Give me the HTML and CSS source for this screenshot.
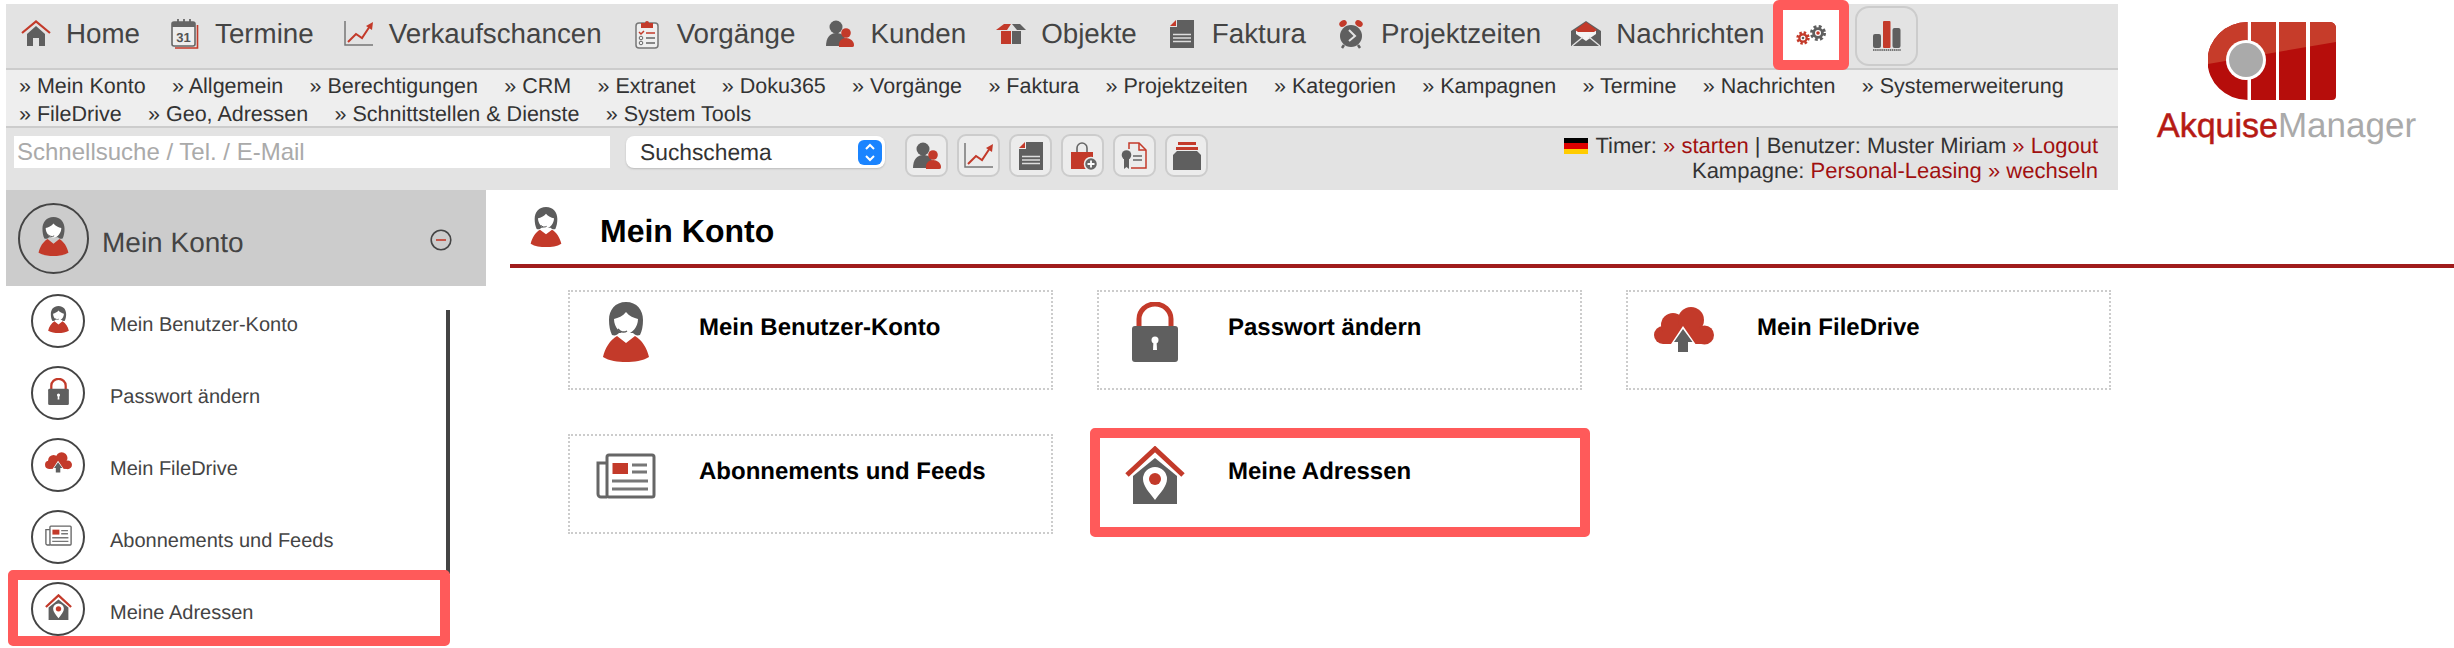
FILE: index.html
```html
<!DOCTYPE html>
<html lang="de">
<head>
  <meta charset="UTF-8">
  <meta name="viewport" content="width=device-width, initial-scale=1.0">
  <title>AkquiseManager - Mein Konto</title>
  <link rel="stylesheet" href="styles.css">
</head>
<body>
<svg class="sprites" width="0" height="0">
  <!-- nav icons, 30x30 -->
  <symbol id="i-home" viewBox="0 0 30 30">
    <path d="M6 15L15 7l9 8v12h-6v-8h-6v8H6z" fill="#5f5f5f"/>
    <path d="M1 14L15 2.500 29 14" fill="none" stroke="#c33a2a" stroke-width="2.200"/>
  </symbol>
  <symbol id="i-chart" viewBox="0 0 30 30">
    <path d="M1 2v24h28" fill="none" stroke="#777" stroke-width="1.500"/>
    <path d="M4 23l8-8 6 4 8-12" fill="none" stroke="#c33a2a" stroke-width="2"/>
    <path d="M29 3l-1 8-6-4z" fill="#c33a2a"/>
  </symbol>
  <symbol id="i-clip" viewBox="0 0 30 30">
    <rect x="4" y="4" width="22" height="25" rx="3" fill="#efefef" stroke="#777" stroke-width="1.500"/>
    <path d="M9 9V4h4a2 2 0 0 1 4 0h4v5z" fill="#c33a2a"/>
    <path d="M7 13l2 2 3-3" fill="none" stroke="#c33a2a" stroke-width="1.500"/>
    <path d="M14 14h9" stroke="#c33a2a" stroke-width="1.500"/>
    <path d="M14 19h9M14 24h9" stroke="#666" stroke-width="1.500"/>
    <circle cx="9" cy="19" r="1.800" fill="none" stroke="#666"/>
    <circle cx="9" cy="24" r="1.800" fill="none" stroke="#666"/>
  </symbol>
  <symbol id="i-people" viewBox="0 0 30 30">
    <circle cx="11" cy="8" r="6.500" fill="#5f5f5f"/>
    <path d="M1 27c0-8 4-13 10-13 5 0 8 2 9 6l-5 7z" fill="#5f5f5f"/>
    <circle cx="21" cy="14" r="4.800" fill="#c33a2a"/>
    <path d="M14 28c-1-6 3-9 7-9s8 3 8 7c0 2-1 2-3 2z" fill="#c33a2a"/>
  </symbol>
  <symbol id="i-box" viewBox="0 0 30 30">
    <path d="M0 11l8-6h7l-4 6z" fill="#c33a2a"/>
    <path d="M5 12h10v13H5z" fill="#c33a2a"/>
    <path d="M16 5h8l6 6h-9z" fill="#5f5f5f"/>
    <path d="M16 12h9v13h-9z" fill="#5f5f5f"/>
  </symbol>
  <symbol id="i-doc" viewBox="0 0 30 30">
    <path d="M10 1h17v28H3V8h7z" fill="#5f5f5f"/>
    <path d="M3 7l6-6v6z" fill="#c33a2a"/>
    <path d="M6 15.500h18M6 19h18M6 22.500h18" stroke="#ddd" stroke-width="1.300"/>
  </symbol>
  <symbol id="i-clock" viewBox="0 0 30 30">
    <ellipse cx="7" cy="4.500" rx="4" ry="3" transform="rotate(-35 7 4.500)" fill="#c33a2a"/>
    <ellipse cx="23" cy="4.500" rx="4" ry="3" transform="rotate(35 23 4.500)" fill="#c33a2a"/>
    <circle cx="15" cy="17" r="11" fill="#5f5f5f"/>
    <path d="M8 26l-2 3M22 26l2 3" stroke="#5f5f5f" stroke-width="2.500"/>
    <path d="M13 11l6 6-6 5" fill="none" stroke="#e3e3e3" stroke-width="2"/>
  </symbol>
  <symbol id="i-mail" viewBox="0 0 30 30">
    <path d="M0 12L15 2l15 10v15H0z" fill="#5f5f5f"/>
    <path d="M5 10h20v5l-10 7-10-7z" fill="#f4f4f4"/>
    <path d="M4 11L15 3l11 8-3 2H7z" fill="#c33a2a"/>
    <path d="M1 27l11-9M29 27l-11-9" stroke="#e3e3e3" stroke-width="1.400"/>
  </symbol>
  <symbol id="i-bag" viewBox="0 0 30 30">
    <path d="M9 11V7a5 5 0 0 1 10 0v4" fill="none" stroke="#666" stroke-width="1.600"/>
    <path d="M3 11h22v17H3z" fill="#c33a2a"/>
    <circle cx="23" cy="23" r="6.500" fill="#666" stroke="#eee" stroke-width="1.500"/>
    <path d="M23 19.500v7M19.500 23h7" stroke="#fff" stroke-width="1.800"/>
  </symbol>
  <symbol id="i-cert" viewBox="0 0 30 30">
    <path d="M9 8V2h10l7 7v18H11" fill="none" stroke="#c33a2a" stroke-width="1.500"/>
    <path d="M19 2v7h7" fill="none" stroke="#c33a2a" stroke-width="1.500"/>
    <circle cx="6.500" cy="14" r="4.800" fill="#5f5f5f"/>
    <path d="M4 18v10l2.500-2 2.500 2V18z" fill="#5f5f5f"/>
    <path d="M13 15h9M13 19h9" stroke="#666" stroke-width="1.500"/>
  </symbol>
  <symbol id="i-archive" viewBox="0 0 30 30">
    <path d="M6 1h18v3H6zM4 6h22v3H4z" fill="#c33a2a"/>
    <path d="M1 14l4-4h20l4 4v15H1z" fill="#5f5f5f"/>
  </symbol>
  <symbol id="i-gears" viewBox="0 0 30 30">
    <circle cx="22" cy="13" r="6" fill="none" stroke="#5f5f5f" stroke-width="4" stroke-dasharray="2.600 2.100"/>
    <circle cx="22" cy="13" r="5.800" fill="#5f5f5f"/>
    <circle cx="22" cy="13" r="3" fill="#fff"/>
    <circle cx="22" cy="13" r="1.800" fill="#c33a2a"/>
    <circle cx="7" cy="18" r="5" fill="none" stroke="#c33a2a" stroke-width="3.400" stroke-dasharray="2.200 1.730"/>
    <circle cx="7" cy="18" r="4.800" fill="#c33a2a"/>
    <circle cx="7" cy="18" r="2.500" fill="#fff"/>
    <circle cx="7" cy="18" r="1.300" fill="#5f5f5f"/>
  </symbol>
  <symbol id="i-bars" viewBox="0 0 30 30">
    <rect x="1" y="13" width="8" height="14" rx="2" fill="#5f5f5f"/>
    <rect x="11" y="0" width="7.500" height="27" rx="1" fill="#c33a2a"/>
    <rect x="20.500" y="7" width="8" height="20" rx="2" fill="#5f5f5f"/>
    <path d="M1 29h28" stroke="#777" stroke-width="2" stroke-dasharray="1.500 .6"/>
  </symbol>
  <!-- account icons, 60x60 -->
  <symbol id="i-woman" viewBox="0 0 60 60">
    <path d="M30 0C19 0 13 8 13 18c0 6 1 11 3 15 3 1 5 0 7-2h14c2 2 4 3 7 2 2-4 3-9 3-15C47 8 41 0 30 0z" fill="#5c5c5c"/>
    <path d="M30 10c-3 4-8 6-12 7 0 8 6 15 12 15s12-7 12-15c-4-1-9-3-12-7z" fill="#fff"/>
    <path d="M22 27c2 3 6 4 9 2" fill="none" stroke="#5c5c5c" stroke-width="1.500"/>
    <path d="M21 34C14 38 9 46 7 55c6 4 15 5 23 5s17-1 23-5c-2-9-7-17-14-21l-9 7z" fill="#c33a2a"/>
  </symbol>
  <symbol id="i-lock" viewBox="0 0 60 60">
    <path d="M14 30V17a16 15 0 0 1 32 0v13" fill="none" stroke="#c33a2a" stroke-width="5"/>
    <rect x="7" y="24" width="46" height="36" rx="3" fill="#5f5f5f"/>
    <circle cx="30" cy="38" r="3.500" fill="#fff"/>
    <path d="M28.500 38h3l.5 10h-4z" fill="#fff"/>
  </symbol>
  <symbol id="i-cloud" viewBox="0 0 60 60">
    <g transform="translate(0 -2)">
      <circle cx="9" cy="35" r="9" fill="#c33a2a"/>
      <circle cx="19" cy="25" r="12" fill="#c33a2a"/>
      <circle cx="37" cy="20" r="13" fill="#c33a2a"/>
      <circle cx="50.500" cy="35" r="9.500" fill="#c33a2a"/>
      <rect x="9" y="28" width="42" height="16" fill="#c33a2a"/>
      <path d="M29 26l13 18.700-5 .3v9H21v-9l-4.500-.3z" fill="#fff"/>
      <path d="M29 29l9.500 13H34v10h-10V42h-4z" fill="#5f5f5f"/>
    </g>
  </symbol>
  <symbol id="i-news" viewBox="0 0 60 60">
    <path d="M11 17H2v31a3 3 0 0 0 3 3h6" fill="none" stroke="#666" stroke-width="3"/>
    <rect x="11" y="9" width="47" height="42" rx="2" fill="#fff" stroke="#666" stroke-width="3"/>
    <rect x="16.500" y="17" width="15.500" height="11" fill="#c33a2a"/>
    <path d="M36 19h15M36 26h15M16 35h36M16 43h36" stroke="#777" stroke-width="3"/>
  </symbol>
  <symbol id="i-house" viewBox="0 0 60 60">
    <path d="M8 30L30 12l22 18v28H8z" fill="#5f5f5f"/>
    <path d="M2 29L30 3l28 26" fill="none" stroke="#c33a2a" stroke-width="5"/>
    <path d="M30 54C24 46 18 40 18 33a12 12 0 0 1 24 0c0 7-6 13-12 21z" fill="#fff"/>
    <circle cx="30" cy="33" r="6" fill="#c33a2a"/>
  </symbol>
</svg>

<div class="top">
  <div class="topbar">
    <nav class="nav">
      <div class="nav-links">
        <a class="nav-item"><svg class="ico30"><use href="#i-home"/></svg>Home</a>
        <a class="nav-item">
          <svg class="ico30" viewBox="0 0 30 30">
            <path d="M27.500 6v23H5" fill="none" stroke="#c33a2a" stroke-width="1.600"/>
            <rect x="2" y="3" width="23" height="24" rx="2" fill="#eee" stroke="#666" stroke-width="1.600"/>
            <rect x="2" y="3" width="23" height="5" fill="#666"/>
            <path d="M8 0v6M14 0v6M20 0v6" stroke="#666" stroke-width="1.800"/>
            <text x="13.500" y="23" text-anchor="middle" class="cal-num">31</text>
          </svg>Termine</a>
        <a class="nav-item"><svg class="ico30"><use href="#i-chart"/></svg>Verkaufschancen</a>
        <a class="nav-item"><svg class="ico30"><use href="#i-clip"/></svg>Vorgänge</a>
        <a class="nav-item"><svg class="ico30"><use href="#i-people"/></svg>Kunden</a>
        <a class="nav-item"><svg class="ico30"><use href="#i-box"/></svg>Objekte</a>
        <a class="nav-item"><svg class="ico30"><use href="#i-doc"/></svg>Faktura</a>
        <a class="nav-item"><svg class="ico30"><use href="#i-clock"/></svg>Projektzeiten</a>
        <a class="nav-item"><svg class="ico30"><use href="#i-mail"/></svg>Nachrichten</a>
      </div>
      <div class="nav-tools">
        <a class="gear-btn"><svg class="ico30"><use href="#i-gears"/></svg></a>
        <a class="bars-btn"><svg class="ico30"><use href="#i-bars"/></svg></a>
      </div>
    </nav>
    <div class="subnav">
      <a>» Mein Konto</a>
      <a>» Allgemein</a>
      <a>» Berechtigungen</a>
      <a>» CRM</a>
      <a>» Extranet</a>
      <a>» Doku365</a>
      <a>» Vorgänge</a>
      <a>» Faktura</a>
      <a>» Projektzeiten</a>
      <a>» Kategorien</a>
      <a>» Kampagnen</a>
      <a>» Termine</a>
      <a>» Nachrichten</a>
      <a>» Systemerweiterung</a>
      <a>» FileDrive</a>
      <a>» Geo, Adressen</a>
      <a>» Schnittstellen &amp; Dienste</a>
      <a>» System Tools</a>
    </div>
    <div class="searchbar">
      <input class="quick" type="text" placeholder="Schnellsuche / Tel. / E-Mail">
      <div class="schema">
        Suchschema
        <span class="stepper">
          <svg width="24" height="25" viewBox="0 0 24 25"><path d="M8 9l4-4 4 4M8 16l4 4 4-4" fill="none" stroke="#fff" stroke-width="2"/></svg>
        </span>
      </div>
      <div class="quick-btns">
        <a class="qbtn"><svg class="ico30"><use href="#i-people"/></svg></a>
        <a class="qbtn"><svg class="ico30"><use href="#i-chart"/></svg></a>
        <a class="qbtn"><svg class="ico30"><use href="#i-doc"/></svg></a>
        <a class="qbtn"><svg class="ico30"><use href="#i-bag"/></svg></a>
        <a class="qbtn"><svg class="ico30"><use href="#i-cert"/></svg></a>
        <a class="qbtn"><svg class="ico30"><use href="#i-archive"/></svg></a>
      </div>
      <div class="session">
        <div><span class="flag"></span>Timer: <a>» starten</a> | Benutzer: Muster Miriam <a>» Logout</a></div>
        <div>Kampagne: <a>Personal-Leasing » wechseln</a></div>
      </div>
    </div>
  </div>
  <div class="logo">
    <svg class="logo-mark" width="128" height="78" viewBox="0 0 128 78">
      <clipPath id="logo-clip">
        <path d="M39.500 0A40 39 0 0 0 39.500 78z"/>
        <path d="M43 0h25v78H43z"/>
        <path d="M71 0h27v78H71z"/>
        <path d="M102 0h20a6 6 0 0 1 6 6v68a4 4 0 0 1-4 4h-22z"/>
      </clipPath>
      <g clip-path="url(#logo-clip)">
        <rect width="128" height="78" fill="#b60d0b"/>
        <path d="M0 0h128v20L0 42z" fill="#c63c2a"/>
      </g>
      <circle cx="38" cy="38" r="20" fill="#fff"/>
      <circle cx="38" cy="38" r="17" fill="#aaa"/>
    </svg>
    <div class="logo-text"><span class="logo-a">Akquise</span><span class="logo-m">Manager</span></div>
  </div>
</div>

<div class="content">
  <aside class="side">
    <div class="side-head">
      <span class="head-circle"><svg class="ico39"><use href="#i-woman"/></svg></span>
      <span class="head-label">Mein Konto</span>
      <svg class="collapse" width="22" height="22" viewBox="0 0 22 22"><circle cx="11" cy="11" r="9.800" fill="none" stroke="#444" stroke-width="1.600"/><path d="M6 11h10" stroke="#c33a2a" stroke-width="1.600"/></svg>
    </div>
    <div class="side-body">
      <ul class="side-list">
        <li class="side-item"><span class="item-circle"><svg class="ico27"><use href="#i-woman"/></svg></span>Mein Benutzer-Konto</li>
        <li class="side-item"><span class="item-circle"><svg class="ico27"><use href="#i-lock"/></svg></span>Passwort ändern</li>
        <li class="side-item"><span class="item-circle"><svg class="ico27"><use href="#i-cloud"/></svg></span>Mein FileDrive</li>
        <li class="side-item"><span class="item-circle"><svg class="ico27"><use href="#i-news"/></svg></span>Abonnements und Feeds</li>
        <li class="side-item marked"><span class="item-circle"><svg class="ico27"><use href="#i-house"/></svg></span>Meine Adressen</li>
      </ul>
      <div class="side-track"></div>
    </div>
  </aside>
  <main class="main">
    <div class="main-head">
      <svg class="ico40"><use href="#i-woman"/></svg>
      <h1>Mein Konto</h1>
    </div>
    <div class="cards">
      <a class="card"><svg class="ico60"><use href="#i-woman"/></svg><span class="card-title">Mein Benutzer-Konto</span></a>
      <a class="card"><svg class="ico60"><use href="#i-lock"/></svg><span class="card-title">Passwort ändern</span></a>
      <a class="card"><svg class="ico60"><use href="#i-cloud"/></svg><span class="card-title">Mein FileDrive</span></a>
      <a class="card"><svg class="ico60"><use href="#i-news"/></svg><span class="card-title">Abonnements und Feeds</span></a>
      <a class="card marked"><svg class="ico60"><use href="#i-house"/></svg><span class="card-title">Meine Adressen</span></a>
    </div>
  </main>
</div>
</body>
</html>
```

FILE: styles.css
```css
*{margin: 0; padding: 0; box-sizing: border-box;}
html, body{height: 648px; overflow: hidden;}
body{background: #fff; color: #333; font-family: "Liberation Sans", Arial, sans-serif; text-rendering: geometricPrecision;}
ul{list-style: none;}
.sprites{position: absolute;}
.cal-num{font: bold 13px "Liberation Sans", sans-serif; fill: #555;}

.ico27{width: 27px; height: 27px;}
.ico30{width: 30px; height: 30px; flex: none;}
.ico39{width: 39px; height: 39px;}
.ico40{width: 40px; height: 40px; flex: none;}
.ico60{width: 60px; height: 60px; flex: none;}

/* top area */
.top{display: flex;}
.topbar{width: 2112px; margin-left: 6px; padding-top: 4px;}

.nav{display: flex; height: 64px; background: #e3e3e3; padding-left: 15px;}
.nav-links{display: flex; gap: 30px; height: 60px; align-items: center;}
.nav-item{display: flex; align-items: center; gap: 15px; font-size: 27.750px; color: #444;}
.nav-tools{display: flex; gap: 6px; margin: -4px 0 0 9px; align-items: flex-start;}
.gear-btn{position: relative; z-index: 1; display: flex; align-items: center; justify-content: center; width: 76px; height: 70px; background: #fff; border: 10px solid #ff5a5a; border-radius: 6px;}
.bars-btn{display: flex; align-items: center; justify-content: center; width: 63px; height: 60px; margin-top: 6px; border: 2px solid #ccc; border-radius: 14px;}

.subnav{display: flex; flex-wrap: wrap; column-gap: 26.300px; height: 60px; padding: 2px 0 0 13px; background: #eee; border-top: 2px solid #ccc; border-bottom: 2px solid #ccc; font-size: 21.500px; line-height: 28px; color: #333;}

.searchbar{display: flex; align-items: flex-start; height: 62px; padding: 8px 20px 0 8px; background: #e3e3e3;}
.quick{width: 596px; height: 32px; padding-left: 3px; border: 0; outline: 0; background: #fff; font: 24px "Liberation Sans", Arial, sans-serif;}
.quick::placeholder{color: #aaa; opacity: 1;}
.schema{display: flex; align-items: center; justify-content: space-between; width: 259px; height: 32px; margin-left: 16px; padding: 0 3px 0 14px; background: #fff; border-radius: 8px; font-size: 22.800px; color: #333; box-shadow: 0 1px 2px #bbb;}
.stepper{display: flex; width: 24px; height: 25px; background: #1a84ff; border-radius: 6px;}
.quick-btns{display: flex; gap: 9px; margin: -2px 0 0 20px;}
.qbtn{display: flex; align-items: center; justify-content: center; width: 43px; height: 43px; background: #ececec; border: 2px solid #ccc; border-radius: 9px;}
.session{margin: -3px 0 0 auto; text-align: right; font-size: 22px; line-height: 25px; color: #333;}
.session a{color: #a01010;}
.flag{display: inline-block; width: 24px; height: 16px; margin-right: 7px; vertical-align: -1px; background: linear-gradient(#000 33%, #d00 33%, #d00 66%, #fc0 66%);}

.logo{padding: 22px 0 0 39px;}
.logo-mark{display: block; margin-left: 51px;}
.logo-text{margin-top: 6px; font-size: 34px; line-height: 40px; white-space: nowrap;}
.logo-a{color: #b61a14; -webkit-text-stroke: .5px #b61a14;}
.logo-m{color: #aaa; font-size: 35px;}

/* content */
.content{display: flex;}
.side{width: 480px; margin-left: 6px; flex: none;}
.side-head{display: flex; align-items: center; height: 96px; padding: 0 34px 0 12px; background: #ccc;}
.head-circle{display: flex; align-items: center; justify-content: center; width: 71px; height: 71px; padding-bottom: 4px; border: 2px solid #444; border-radius: 50%;}
.head-label{flex: 1; margin: 10px 0 0 13px; font-size: 28px; color: #444;}
.collapse{margin-top: 4px;}

.side-body{display: flex;}
.side-list{width: 440px;}
.side-item{position: relative; display: flex; align-items: center; gap: 25px; height: 72px; padding: 6px 0 0 25px; font-size: 20px; color: #444;}
.item-circle{display: flex; align-items: center; justify-content: center; flex: none; width: 54px; height: 54px; padding-bottom: 4px; margin-top: -8px; border: 2px solid #444; border-radius: 50%;}
.side-track{width: 4px; height: 264px; margin-top: 24px; background: #444;}

.side-item.marked::after{content: ""; position: absolute; left: 2px; right: -4px; top: -4px; bottom: 0; border: 10px solid #ff5a5a; border-radius: 5px;}

.main{flex: 1; margin-left: 24px;}
.main-head{display: flex; align-items: flex-start; height: 78px; padding: 17px 0 0 16px; border-bottom: 4px solid #a01c1c;}
.main-head h1{margin: 4px 0 0 34px; font-size: 32px; line-height: 40px; color: #000;}

.cards{display: grid; grid-template-columns: repeat(3, 485px); grid-auto-rows: 100px; gap: 44px; margin: 22px 0 0 58px;}
.card{position: relative; display: flex; padding: 10px 0 0 26px; border: 2px dotted #ccc;}
.card-title{margin: 6px 0 0 43px; font-size: 24px; font-weight: bold; line-height: 40px; color: #000;}
.card.marked{border-color: transparent;}
.card.marked::after{content: ""; position: absolute; left: -9px; top: -8px; right: -10px; bottom: -5px; border: 10px solid #ff5a5a; border-radius: 5px;}
```
